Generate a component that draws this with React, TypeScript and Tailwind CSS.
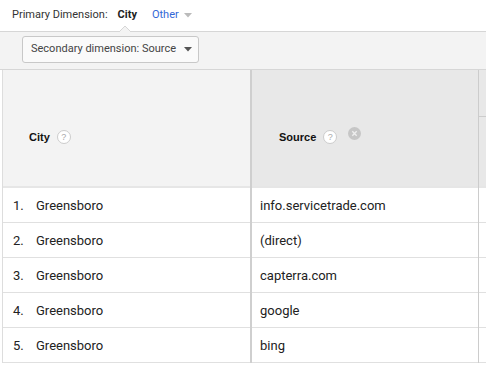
import React from 'react';

const rows = [
  { n: 1, city: 'Greensboro', source: 'info.servicetrade.com' },
  { n: 2, city: 'Greensboro', source: '(direct)' },
  { n: 3, city: 'Greensboro', source: 'capterra.com' },
  { n: 4, city: 'Greensboro', source: 'google' },
  { n: 5, city: 'Greensboro', source: 'bing' },
];

function Help() {
  return (
    <span className="inline-flex h-[14px] w-[14px] items-center justify-center rounded-full border border-[#ccc] bg-white text-[9px] font-normal leading-none text-[#aaa]">
      ?
    </span>
  );
}

function Remove() {
  return (
    <svg width="13" height="13" viewBox="0 0 13 13" className="-mt-2">
      <circle cx="6.5" cy="6.5" r="6.5" fill="#c6c6c6" />
      <path d="M4.3 4.3 L8.7 8.7 M8.7 4.3 L4.3 8.7" stroke="#eee" strokeWidth="1.4" />
    </svg>
  );
}

export default function App() {
  return (
    <div className="h-[374px] w-[486px] overflow-hidden bg-white font-['Roboto',sans-serif] text-[#222]">
      <div className="flex h-[31px] items-center pl-3 text-[11px]">
        <span className="text-[#333]">Primary Dimension:</span>
        <span className="ml-[10px] font-bold text-[#222]">City</span>
        <span className="ml-[15px] text-[#3367d6]">Other</span>
        <svg width="8" height="5" viewBox="0 0 8 5" className="ml-[5px]">
          <path d="M0 0 L8 0 L4 4.5 Z" fill="#bbb" />
        </svg>
      </div>
      <div className="relative h-[39px] border-y border-[#d6d6d6] bg-[#f3f3f3] pl-[22px] pt-[4px]">
        <svg width="12" height="7" viewBox="0 0 12 7" className="absolute left-[119px] top-[-7px]">
          <path d="M0 7 L6 1 L12 7" fill="#f3f3f3" stroke="#d6d6d6" strokeWidth="1" />
          <rect x="1" y="6.6" width="10" height="1" fill="#f3f3f3" />
        </svg>
        <div className="flex h-[27px] w-[177px] items-center whitespace-nowrap rounded-[3px] border border-[#c8c8c8] bg-[#fafafa] pl-[8px] text-[11px] text-[#444]">
          <span>Secondary dimension: Source</span>
          <svg width="8" height="5" viewBox="0 0 8 5" className="ml-auto mr-[6px]">
            <path d="M0 0 L8 0 L4 4.5 Z" fill="#555" />
          </svg>
        </div>
      </div>
      <div className="ml-[2px] flex">
        <div className="w-[250px] border-l border-r-2 border-l-[#ddd] border-r-[#cfcfcf]">
          <div className="flex h-[118px] items-center border-b-2 border-[#e6e6e6] bg-[#f3f3f3] pl-[26px] pt-[18px] font-['Liberation_Sans',sans-serif] text-[11px] font-bold text-[#111]">
            <span className="mr-[7px]">City</span>
            <Help />
          </div>
          {rows.map(r => (
            <div key={r.n} className="flex h-[35px] items-center border-b border-[#e0e0e0] pl-[10px] pt-[2px] text-[13px]">
              <span className="w-[23px]">{r.n}.</span>
              <span>{r.city}</span>
            </div>
          ))}
        </div>
        <div className="w-[227px] border-r border-[#ccc]">
          <div className="flex h-[118px] items-center border-b-2 border-[#e6e6e6] bg-[#e8e8e8] pl-[27px] pt-[18px] font-['Liberation_Sans',sans-serif] text-[11px] font-bold text-[#111]">
            <span className="mr-[7px]">Source</span>
            <Help />
            <span className="ml-[11px] flex">
              <Remove />
            </span>
          </div>
          {rows.map(r => (
            <div key={r.n} className="flex h-[35px] items-center border-b border-[#e0e0e0] pl-[8px] pt-[2px] text-[13px]">
              {r.source}
            </div>
          ))}
        </div>
        <div className="flex-1">
          <div className="h-[118px] border-b-2 border-[#e6e6e6] bg-[#e8e8e8]">
            <div className="h-[47px] border-b border-[#ccc]" />
          </div>
          {rows.map(r => (
            <div key={r.n} className="h-[35px] border-b border-[#e0e0e0]" />
          ))}
        </div>
      </div>
    </div>
  );
}
